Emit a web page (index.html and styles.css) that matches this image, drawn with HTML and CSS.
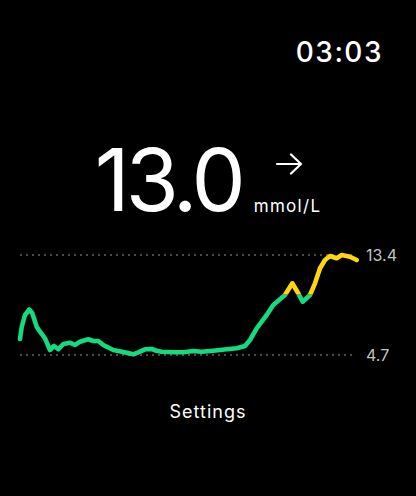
FILE: index.html
```html
<!DOCTYPE html>
<html lang="en">
<head>
  <meta charset="UTF-8">
  <meta name="viewport" content="width=device-width, initial-scale=1.0">
  <title>Glucose</title>
  <link rel="stylesheet" href="styles.css">
</head>
<body>

  <main class="screen">
    <header class="clock">03:03</header>

    <section class="reading">
      <span class="value">13.0</span>
      <div class="meta">
        <svg class="trend" width="27" height="22" viewBox="0 0 27 22">
          <path d="M1 11 H25 M15 1.5 L25 11 L15 20.5" fill="none" stroke="#fff" stroke-width="2.2" stroke-linecap="round" stroke-linejoin="round"/>
        </svg>
        <span class="unit">mmol/L</span>
      </div>
    </section>

    <section class="chart">
      <svg class="plot" width="362" height="130" viewBox="0 240 362 130">
        <defs>
          <clipPath id="high"><rect x="0" y="240" width="362" height="54.5"/></clipPath>
          <clipPath id="inRange"><rect x="0" y="294.5" width="362" height="76"/></clipPath>
          <path id="trace" d="M20 339 L21.7 327 L25 315 L29.3 309.5 L32.3 313.3 L36.7 326.7 L40 331.7 L45 338.3 L50 350 L54 346 L58.3 349.3 L63.3 344 L70 342.7 L75 345 L80 341.7 L88.3 339.3 L93.3 341 L98.3 341 L103.3 345 L113.3 350 L126.7 352.7 L133.3 354.3 L138.3 352.3 L145 349.3 L151.7 349 L156.7 350.7 L161.7 351.7 L173.3 352.3 L183.3 352.3 L193.3 351 L201.7 351.7 L213.3 350.7 L226.7 349.3 L236.7 348.3 L245 346 L250 340 L256.7 328.3 L261.7 321.7 L266.7 315 L273.3 305 L280 299.3 L285 295 L292.3 283.3 L297.3 291.7 L302.7 301.7 L310 295 L315 283.3 L320 268.3 L325 260 L330 256 L336.7 258.3 L341.7 255 L350 256.7 L356.7 260"/>
        </defs>
        <!-- target range guides -->
        <line class="guide" x1="20" y1="255" x2="353" y2="255"/>
        <line class="guide" x1="20" y1="355" x2="353" y2="355"/>
        <use href="#trace" class="trace green" clip-path="url(#inRange)"/>
        <use href="#trace" class="trace yellow" clip-path="url(#high)"/>
      </svg>
      <div class="scale">
        <span>13.4</span>
        <span>4.7</span>
      </div>
    </section>

    <div class="settings">Settings</div>
  </main>

</body>
</html>
```

FILE: styles.css
```css
body {
  margin: 0;
  background: #000;
  color: #fff;
  font-family: 'Inter', 'Roboto', sans-serif;
}

.screen {
  width: 416px;
  height: 496px;
  overflow: hidden;
}

.clock {
  padding: 35px 33px 0 0;
  text-align: right;
  font-size: 28px;
  line-height: 34px;
  font-weight: 500;
  letter-spacing: 1.5px;
}

.reading {
  display: flex;
  justify-content: center;
  align-items: flex-end;
  margin-top: 68px;
  gap: 12px;
}

.value {
  font-size: 86px;
  line-height: 86px;
  font-weight: 400;
  letter-spacing: -4px;
}

.meta {
  display: flex;
  flex-direction: column;
  align-items: flex-start;
  gap: 23px;
  padding-bottom: 9px;
}

.trend {
  display: block;
  margin-left: 22px;
}

.unit {
  font-size: 17px;
  line-height: 16px;
  letter-spacing: 1.3px;
}

.chart {
  display: flex;
  margin-top: 17px;
  height: 130px;
}

.plot {
  display: block;
}

.guide {
  stroke: #4a4a4a;
  stroke-width: 2;
  stroke-dasharray: 2 4;
}

.trace {
  fill: none;
  stroke-width: 4.6;
  stroke-linecap: round;
  stroke-linejoin: round;
}

.green {
  stroke: #14db80;
}

.yellow {
  stroke: #ffd60a;
}

.scale {
  display: flex;
  flex-direction: column;
  justify-content: space-between;
  padding: 5px 0 5px 4px;
  font-size: 16px;
  line-height: 20px;
  color: #c2c2c2;
}

.settings {
  margin-top: 31px;
  text-align: center;
  font-size: 18px;
  line-height: 22px;
  letter-spacing: 1px;
}
```
